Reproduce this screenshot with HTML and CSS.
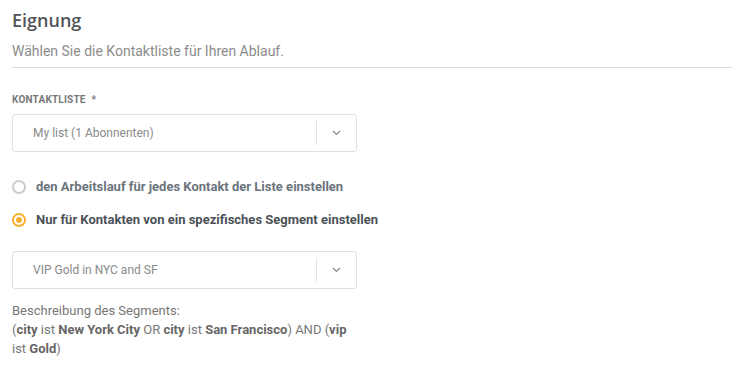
FILE: index.html
```html
<!DOCTYPE html>
<html>
<head>
    <title>Eignung</title>
    <link rel="stylesheet" href="styles.css">
</head>
<body>
    <div class="section">
        <div class="section-header">
            <h2 class="section-title">Eignung</h2>
            <p class="section-subtitle">Wählen Sie die Kontaktliste für Ihren Ablauf.</p>
        </div>

        <div class="form-block">
            <label class="field-label">Kontaktliste <span class="required">*</span></label>
            <div class="select-box">
                <span class="select-value">My list (1 Abonnenten)</span>
                <span class="select-toggle">
                    <svg width="9" height="6" viewBox="0 0 9 6"><path d="M1 1l3.5 3.5L8 1" fill="none" stroke="#888" stroke-width="1.2"/></svg>
                </span>
            </div>

            <div class="radio-list">
                <label class="radio-row">
                    <span class="radio"></span>
                    <span class="radio-text">den Arbeitslauf für jedes Kontakt der Liste einstellen</span>
                </label>
                <label class="radio-row checked">
                    <span class="radio"></span>
                    <span class="radio-text">Nur für Kontakten von ein spezifisches Segment einstellen</span>
                </label>
            </div>

            <div class="select-box">
                <span class="select-value">VIP Gold in NYC and SF</span>
                <span class="select-toggle">
                    <svg width="9" height="6" viewBox="0 0 9 6"><path d="M1 1l3.5 3.5L8 1" fill="none" stroke="#888" stroke-width="1.2"/></svg>
                </span>
            </div>

            <p class="segment-desc">
                Beschreibung des Segments:<br>
                (<b>city</b> ist <b>New York City</b> OR <b>city</b> ist <b>San Francisco</b>) AND (<b>vip</b> ist <b>Gold</b>)
            </p>
        </div>
    </div>
</body>
</html>
```

FILE: styles.css
```css
body {
    margin: 0;
    background-color: #fff;
    font-family: Roboto, "Liberation Sans", sans-serif;
}
.section {
    padding: 8px 12px;
}
.section-header {
    border-bottom: 1px solid #dcdcdc;
    padding-bottom: 6px;
}
.section-title {
    font-family: "Open Sans", sans-serif;
    font-weight: 600;
    font-size: 18px;
    line-height: 24px;
    color: #53545a;
    margin: 0 0 9px;
}
.section-subtitle {
    font-size: 14px;
    line-height: 20px;
    color: #8c8c8c;
    margin: 0;
}
.form-block {
    width: 345px;
    padding-top: 26px;
}
.field-label {
    display: block;
    font-size: 10px;
    font-weight: 700;
    letter-spacing: 0.2px;
    text-transform: uppercase;
    color: #777;
    margin-bottom: 9px;
}
.required {
    margin-left: 3px;
}
.select-box {
    display: flex;
    align-items: center;
    height: 38px;
    border: 1px solid #e0e0e0;
    border-radius: 3px;
    box-sizing: border-box;
}
.select-value {
    flex: 1;
    padding-left: 20px;
    font-size: 12px;
    color: #8a8a8a;
}
.select-toggle {
    display: flex;
    align-items: center;
    justify-content: center;
    width: 39px;
    height: 24px;
    border-left: 1px solid #e3e3e3;
}
.radio-list {
    padding: 27px 0 24px;
    display: flex;
    flex-direction: column;
    gap: 18px;
}
.radio-row {
    display: flex;
    align-items: center;
    gap: 10px;
    white-space: nowrap;
}
.radio {
    flex-shrink: 0;
    width: 14px;
    height: 14px;
    border: 2px solid #ccc;
    border-radius: 50%;
    box-sizing: border-box;
    position: relative;
}
.radio-text {
    font-size: 13px;
    font-weight: 700;
    color: #6a747c;
}
.radio-row.checked .radio {
    border-color: #f7b12f;
}
.radio-row.checked .radio::after {
    content: "";
    position: absolute;
    left: 2px;
    top: 2px;
    width: 6px;
    height: 6px;
    border-radius: 50%;
    background: #f7b12f;
}
.radio-row.checked .radio-text {
    color: #4c5157;
}
.segment-desc {
    font-size: 13px;
    line-height: 19px;
    color: #777;
    margin: 12px 0 0;
}
.segment-desc b {
    color: #666;
}
```
